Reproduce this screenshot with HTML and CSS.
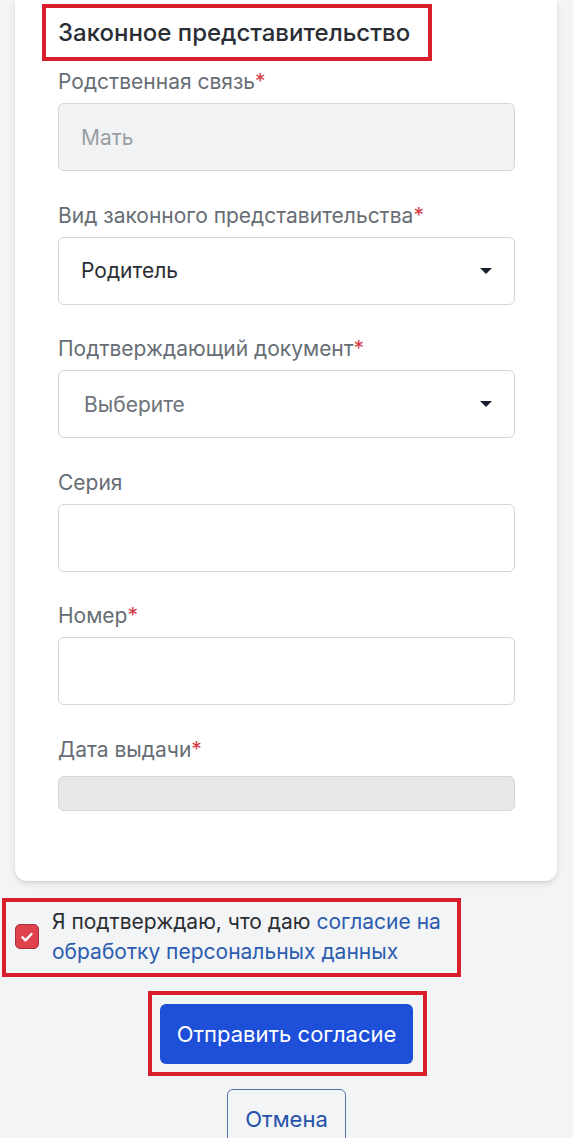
FILE: index.html
```html
<!DOCTYPE html>
<html lang="ru">
<head>
<meta charset="utf-8">
<title>Законное представительство</title>
<link rel="stylesheet" href="styles.css">
</head>
<body>
<div class="card">
  <h2 class="heading">Законное представительство</h2>

  <div class="field">
    <div class="label">Родственная связь<span class="req">*</span></div>
    <div class="input disabled"><span class="muted">Мать</span></div>
  </div>

  <div class="field">
    <div class="label">Вид законного представительства<span class="req">*</span></div>
    <div class="input select"><span class="value">Родитель</span><span class="caret"></span></div>
  </div>

  <div class="field">
    <div class="label">Подтверждающий документ<span class="req">*</span></div>
    <div class="input select"><span class="placeholder">Выберите</span><span class="caret"></span></div>
  </div>

  <div class="field">
    <div class="label">Серия</div>
    <div class="input"></div>
  </div>

  <div class="field">
    <div class="label">Номер<span class="req">*</span></div>
    <div class="input"></div>
  </div>

  <div class="field last">
    <div class="label">Дата выдачи<span class="req">*</span></div>
    <div class="input date"></div>
  </div>
</div>

<div class="consent">
  <span class="checkbox">
    <svg viewBox="0 0 16 16" width="16" height="16"><path d="M3.5 8.3l3 3 6-6.3" fill="none" stroke="#fff" stroke-width="2.4" stroke-linecap="round" stroke-linejoin="round"/></svg>
  </span>
  <p class="consent-text">Я подтверждаю, что даю <a href="#" class="link">согласие на обработку персональных данных</a></p>
</div>

<div class="actions">
  <div class="submit-frame">
    <button class="btn-primary">Отправить согласие</button>
  </div>
  <button class="btn-outline">Отмена</button>
</div>
</body>
</html>
```

FILE: styles.css
```css
* { box-sizing: border-box; }
html, body { margin: 0; padding: 0; }
body {
  background: #f3f4f6;
  font-family: Inter, "Noto Sans", "Liberation Sans", sans-serif;
  color: #212529;
  width: 573px;
  height: 1138px;
  overflow: hidden;
}
.card {
  margin: 0 16px 0 15px;
  background: #fff;
  border-radius: 0 0 12px 12px;
  box-shadow: 0 3px 6px rgba(0,0,0,0.10), 0 1px 2px rgba(0,0,0,0.06);
  padding: 4px 42px 70px 43px;
}
.heading {
  display: inline-block;
  margin: 0 0 8px -16px;
  border: 4px solid #d81f2b;
  padding: 0 18px 0 12px;
  height: 57px;
  line-height: 49px;
  font-size: 24px;
  font-weight: 500;
  color: #2a2e34;
  white-space: nowrap;
}
.field { margin-bottom: 31.5px; }
.field.last { margin-bottom: 0; }
.label {
  font-size: 21px;
  line-height: 26px;
  color: #676d74;
  margin-bottom: 8px;
}
.field.last .label { margin-bottom: 13px; }
.req { color: #d63a45; }
.input {
  height: 68px;
  border: 1px solid #d3d5d8;
  border-radius: 6px;
  background: #fff;
  display: flex;
  align-items: center;
  padding: 0 22px;
  font-size: 21px;
}
.input.disabled { background: #f1f2f4; }
.muted { color: #9a9ea4; }
.value { color: #2a2e33; }
.placeholder { color: #6d7279; padding-left: 3px; }
.input.select { justify-content: space-between; }
.caret {
  width: 0; height: 0;
  border-left: 6px solid transparent;
  border-right: 6px solid transparent;
  border-top: 6px solid #1b2030;
}
.input.date {
  height: 35px;
  background: #e7e7e8;
}
.consent {
  margin: 17px 0 0 2px;
  width: 459px;
  border: 4px solid #d81f2b;
  display: flex;
  align-items: center;
  padding: 5px 4px 6px 9px;
}
.checkbox {
  flex: none;
  width: 24px; height: 25px;
  border-radius: 5px;
  background: #e0424d;
  border: 1px solid #a8323a;
  display: flex;
  align-items: center;
  justify-content: center;
  margin-right: 13px;
}
.consent-text {
  margin: 0;
  font-size: 21px;
  line-height: 30px;
  color: #2a2e33;
}
.link { color: #2b5cb0; text-decoration: none; }
.actions {
  display: flex;
  flex-direction: column;
  align-items: center;
  margin-top: 14px;
}
.submit-frame {
  border: 4px solid #d81f2b;
  padding: 9px 10px 8px 8px;
  margin-left: 2px;
}
.btn-primary {
  display: block;
  width: 253px;
  height: 60px;
  border: none;
  border-radius: 6px;
  background: #1d4fd8;
  color: #fff;
  font-family: inherit;
  font-size: 22px;
  font-weight: 400;
}
.btn-outline {
  margin-top: 13px;
  width: 119px;
  height: 60px;
  border: 1.5px solid #5375b0;
  border-radius: 6px;
  background: transparent;
  color: #2452a8;
  font-family: inherit;
  font-size: 22px;
  font-weight: 400;
}
```
